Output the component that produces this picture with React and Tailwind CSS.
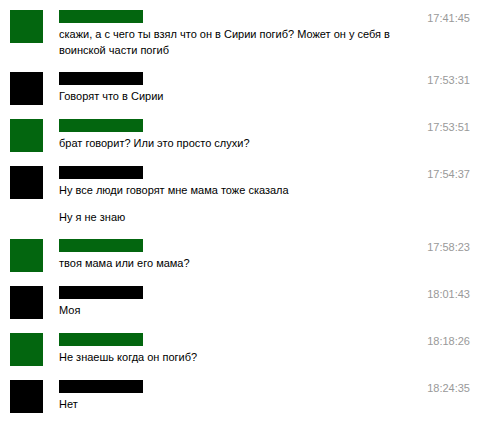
import React from "react";

const GREEN = "bg-[#03660f]";

const rows = [
  { c: "g", t: "17:41:45", m: ["скажи, а с чего ты взял что он в Сирии погиб? Может он у себя в воинской части погиб"] },
  { c: "b", t: "17:53:31", m: ["Говорят что в Сирии"] },
  { c: "g", t: "17:53:51", m: ["брат говорит? Или это просто слухи?"] },
  { c: "b", t: "17:54:37", m: ["Ну все люди говорят мне мама тоже сказала", "Ну я не знаю"] },
  { c: "g", t: "17:58:23", m: ["твоя мама или его мама?"] },
  { c: "b", t: "18:01:43", m: ["Моя"] },
  { c: "g", t: "18:18:26", m: ["Не знаешь когда он погиб?"] },
  { c: "b", t: "18:24:35", m: ["Нет"] },
];

export default function App() {
  return (
    <div
      className="w-[480px] h-[421px] bg-white overflow-hidden pt-[10px] flex flex-col gap-[14px]"
      style={{ fontFamily: '"Liberation Sans", Arial, sans-serif' }}
    >
      {rows.map((r, i) => (
        <div key={i} className="flex items-start pl-[10px] pr-[10px]">
          <div className={`w-[33px] h-[33px] shrink-0 ${r.c === "g" ? GREEN : "bg-black"}`} />
          <div className="ml-[16px] flex-1 flex flex-col">
            <div className={`w-[84px] h-[13px] ${r.c === "g" ? GREEN : "bg-black"}`} />
            <div className="mt-[3px] flex flex-col gap-[11px]">
              {r.m.map((m, j) => (
                <div key={j} className="text-[11px] leading-[16px] text-black w-[335px]">
                  {m}
                </div>
              ))}
            </div>
          </div>
          <div className="text-[11px] leading-[16px] text-[#999999] shrink-0">{r.t}</div>
        </div>
      ))}
    </div>
  );
}
